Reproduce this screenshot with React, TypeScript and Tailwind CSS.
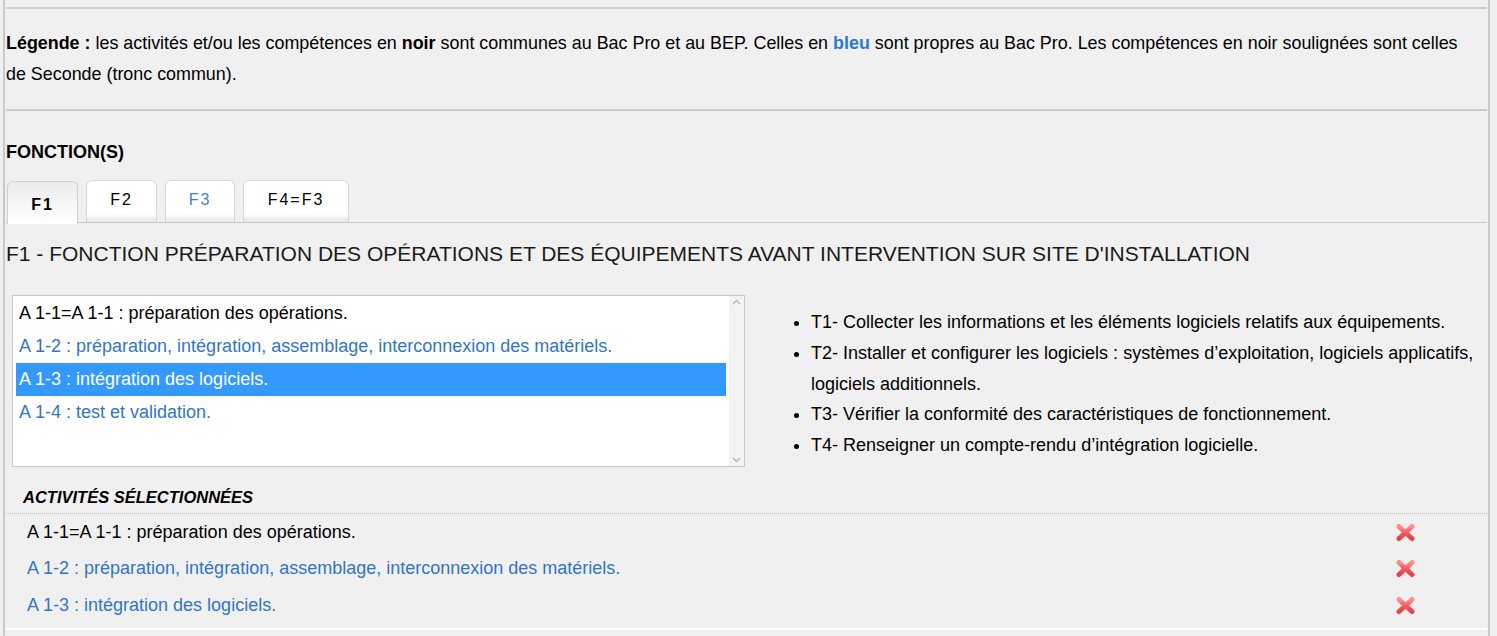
import React from "react";

const blue = "text-[#3275c8]";

function RedCross({ id }: { id: string }) {
  return (
    <svg width="21" height="19" viewBox="0 0 21 19">
      <defs>
        <linearGradient id={id} x1="0" y1="0" x2="0" y2="1">
          <stop offset="0" stopColor="#ff9090" />
          <stop offset="0.5" stopColor="#f45b62" />
          <stop offset="1" stopColor="#e0444b" />
        </linearGradient>
      </defs>
      <path d="M4 3.5 L17 15.5 M17 3.5 L4 15.5" stroke={`url(#${id})`} strokeWidth="5" strokeLinecap="round" fill="none" />
    </svg>
  );
}

const listItems = [
  { label: "A 1-1=A 1-1 : préparation des opérations.", blue: false },
  { label: "A 1-2 : préparation, intégration, assemblage, interconnexion des matériels.", blue: true },
  { label: "A 1-3 : intégration des logiciels.", blue: false, selected: true },
  { label: "A 1-4 : test et validation.", blue: true },
];

const tasks = [
  "T1- Collecter les informations et les éléments logiciels relatifs aux équipements.",
  "T2- Installer et configurer les logiciels : systèmes d’exploitation, logiciels applicatifs, logiciels additionnels.",
  "T3- Vérifier la conformité des caractéristiques de fonctionnement.",
  "T4- Renseigner un compte-rendu d’intégration logicielle.",
];

const selected = [
  { label: "A 1-1=A 1-1 : préparation des opérations.", blue: false },
  { label: "A 1-2 : préparation, intégration, assemblage, interconnexion des matériels.", blue: true },
  { label: "A 1-3 : intégration des logiciels.", blue: true },
];

export default function App() {
  return (
    <div className="min-h-[636px] bg-[#f0f0f0] font-['Liberation_Sans',Arial,sans-serif] text-black">
      <div className="ml-[3px] w-[1487px] border-x-2 border-[#c9c9c9] px-[1px]">
        {/* cropped strip above */}
        <div className="h-[9px] border-b-2 border-[#cbcbcb]" />

        {/* Legend */}
        <div className="border-b-2 border-[#cbcbcb] pt-[19px] pb-[19px] pr-[10px] text-[17.9px] leading-[31px]">
          <b>Légende :</b> les activités et/ou les compétences en <b>noir</b> sont communes au Bac Pro et au BEP. Celles en{" "}
          <b className="text-[#2b79d3]">bleu</b> sont propres au Bac Pro. Les compétences en noir soulignées sont celles de
          Seconde (tronc commun).
        </div>

        <div className="pt-[30px] text-[18px] font-bold leading-[22px]">FONCTION(S)</div>

        {/* Tabs */}
        <div className="mt-[17px] flex h-[43px] items-end gap-[8px] border-b border-[#c5c5c5] pl-[1px]">
          <div className="-mb-[2px] flex h-[43px] w-[71px] items-center justify-center rounded-t-[6px] border border-b-0 border-[#cfcfcf] bg-gradient-to-b from-[#ececec] to-white pt-[3px] text-[16px] font-bold tracking-[2px]">
            F1
          </div>
          <div className="flex h-[42px] w-[71px] items-center justify-center rounded-t-[6px] border border-b-0 border-[#d6d6d6] bg-gradient-to-b from-white from-80% to-[#e6e6e6] pb-[4px] text-[16px] tracking-[2px]">
            F2
          </div>
          <div className="flex h-[42px] w-[70px] items-center justify-center rounded-t-[6px] border border-b-0 border-[#d6d6d6] bg-gradient-to-b from-white from-80% to-[#e6e6e6] pb-[4px] text-[16px] tracking-[2px] text-[#3d7fcf]">
            F3
          </div>
          <div className="flex h-[42px] w-[106px] items-center justify-center rounded-t-[6px] border border-b-0 border-[#d6d6d6] bg-gradient-to-b from-white from-80% to-[#e6e6e6] pb-[4px] text-[16px] tracking-[2px]">
            F4=F3
          </div>
        </div>

        <h1 className="mt-[17px] text-[21px] leading-[28px] text-[#1a1a1a]">
          F1 - FONCTION PRÉPARATION DES OPÉRATIONS ET DES ÉQUIPEMENTS AVANT INTERVENTION SUR SITE D'INSTALLATION
        </h1>

        <div className="mt-[27px] flex items-start">
          {/* listbox */}
          <div className="ml-[6px] flex h-[172px] w-[733px] shrink-0 border border-[#c6c6c6] bg-white">
            <div className="flex-1 pl-[3px] pr-[3px] pt-[1px] text-[18px]">
              {listItems.map((it) => (
                <div
                  key={it.label}
                  className={`h-[33px] whitespace-nowrap pl-[3px] leading-[33px] ${
                    it.selected ? "bg-[#3399ff] text-white" : it.blue ? blue : "text-black"
                  }`}
                >
                  {it.label}
                </div>
              ))}
            </div>
            <div className="flex w-[15px] flex-col items-center justify-between bg-[#f3f3f3] py-[3px]">
              <svg width="9" height="6" viewBox="0 0 9 6">
                <path d="M1 5 L4.5 1.5 L8 5" stroke="#b5b5b5" strokeWidth="1.3" fill="none" />
              </svg>
              <svg width="9" height="6" viewBox="0 0 9 6">
                <path d="M1 1 L4.5 4.5 L8 1" stroke="#b5b5b5" strokeWidth="1.3" fill="none" />
              </svg>
            </div>
          </div>

          {/* tasks */}
          <ul className="ml-[66px] mt-[12px] list-disc text-[18px] leading-[30.75px]">
            {tasks.map((t) => (
              <li key={t}>{t}</li>
            ))}
          </ul>
        </div>

        {/* Selected activities */}
        <div className="mt-[20px] border-b border-dotted border-[#bdbdbd] pb-[6px] pl-[17px] text-[16.5px] font-bold italic leading-[20px]">
          ACTIVITÉS SÉLECTIONNÉES
        </div>
        <div className="border-b-2 border-white pb-[4px]">
          {selected.map((s, i) => (
            <div key={s.label} className="flex h-[36.5px] items-center justify-between pl-[21px] pr-[71px] text-[18px]">
              <span className={s.blue ? blue : "text-black"}>{s.label}</span>
              <RedCross id={`rc${i}`} />
            </div>
          ))}
        </div>
        <div className="h-[8px]" />
      </div>
    </div>
  );
}
